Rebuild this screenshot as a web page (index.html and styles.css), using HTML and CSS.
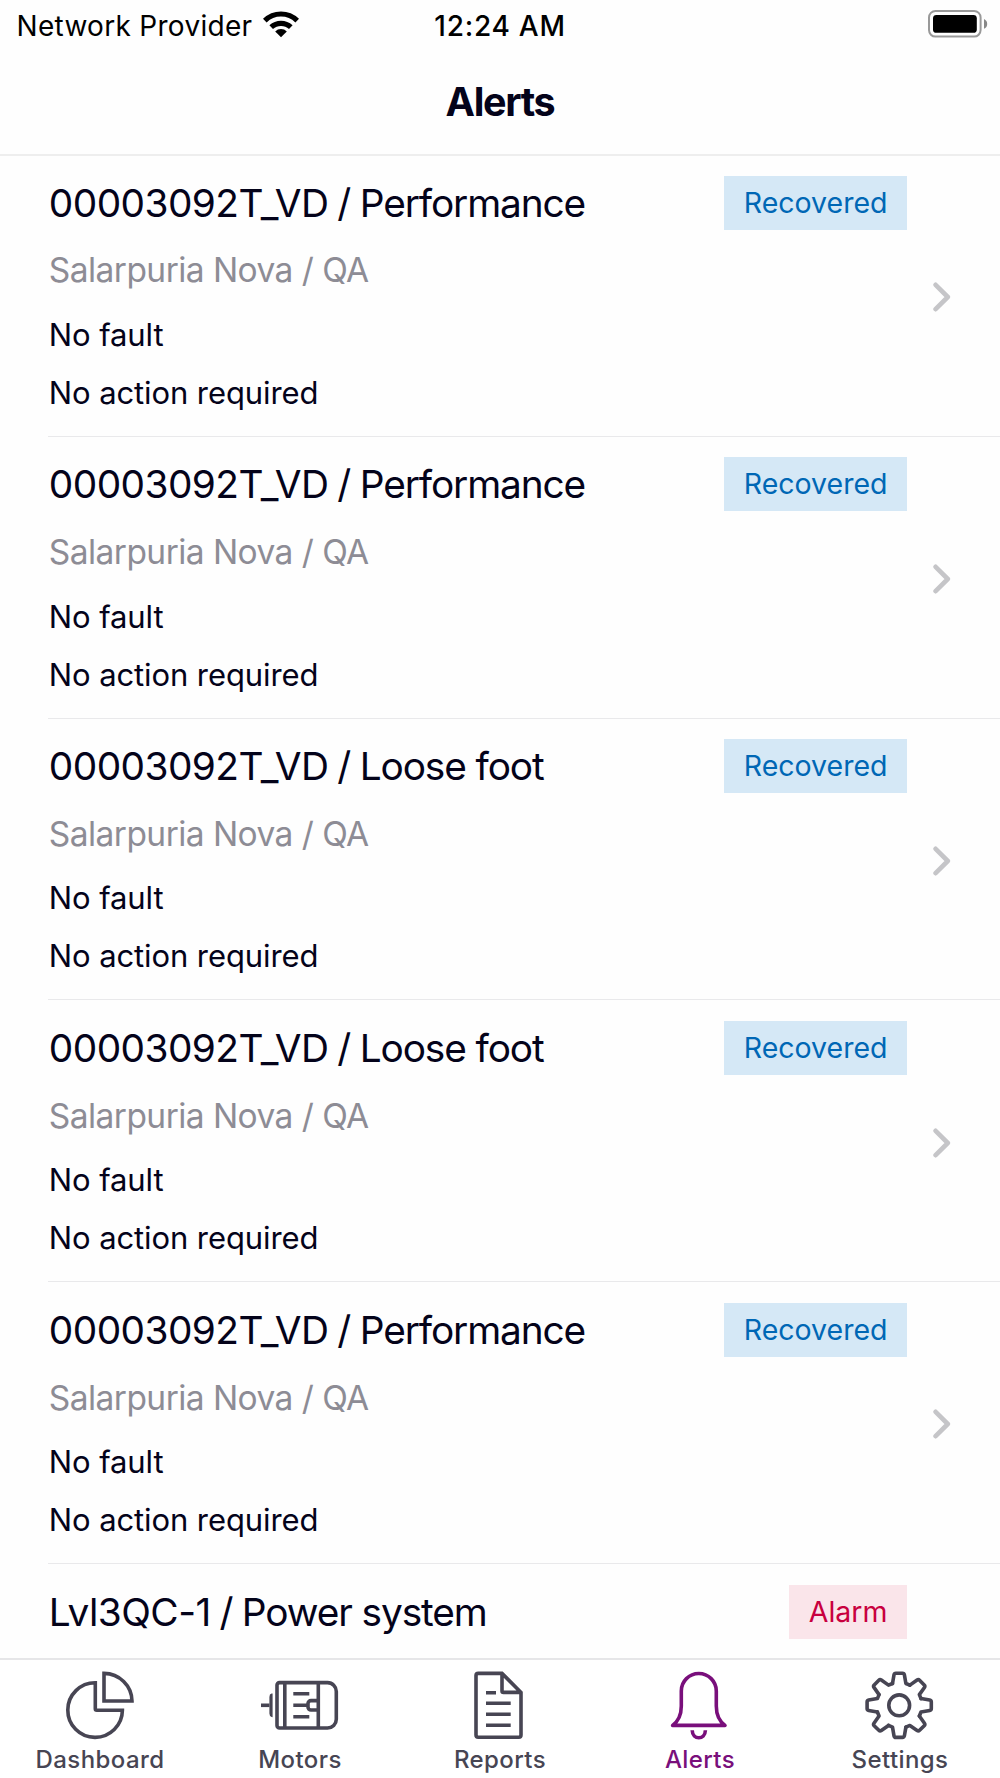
FILE: index.html
```html
<!DOCTYPE html>
<html lang="en">
<head>
<meta charset="utf-8">
<title>Alerts</title>
<link rel="stylesheet" href="styles.css">
</head>
<body>
<div class="screen">
  <header class="status">
    <div class="carrier"><span class="carrier-name">Network Provider</span>
      <svg class="wifi" viewBox="0 0 36 28" width="36" height="28"><g fill="none" stroke="#000" stroke-width="5.2"><path d="M1.8 10.6a23.2 23.2 0 0 1 32.4 0"/><path d="M8.2 17.2a14.2 14.2 0 0 1 19.6 0"/></g><path d="M12.2 21.4a8.4 8.4 0 0 1 11.6 0L18 27.2z"/></svg>
    </div>
    <span class="time">12:24 AM</span>
    <svg class="battery" viewBox="0 0 60 28" width="60" height="28"><rect x="1" y="1" width="51.6" height="25.6" rx="6.5" fill="none" stroke="#999" stroke-width="2"/><rect x="5" y="5" width="43.8" height="17.8" rx="3.4"/><path d="M56 9q3.2 1.6 3.2 4.9T56 18.8z" fill="#888"/></svg>
  </header>
  <div class="titlebar"><h1>Alerts</h1></div>
  <main class="list">
    <article class="row"><div class="info"><div class="head"><h2>00003092T_VD / <span class="kind">Performance</span></h2><span class="badge recovered">Recovered</span></div><p class="site">Salarpuria Nova / QA</p><p class="fault">No fault</p><p class="action">No action required</p></div><svg class="chevron" viewBox="0 0 18 30" width="18" height="30"><path d="M2.6 2.8 14.8 15 2.6 27.2"/></svg></article>
    <article class="row"><div class="info"><div class="head"><h2>00003092T_VD / <span class="kind">Performance</span></h2><span class="badge recovered">Recovered</span></div><p class="site">Salarpuria Nova / QA</p><p class="fault">No fault</p><p class="action">No action required</p></div><svg class="chevron" viewBox="0 0 18 30" width="18" height="30"><path d="M2.6 2.8 14.8 15 2.6 27.2"/></svg></article>
    <article class="row"><div class="info"><div class="head"><h2>00003092T_VD / <span class="kind">Loose foot</span></h2><span class="badge recovered">Recovered</span></div><p class="site">Salarpuria Nova / QA</p><p class="fault">No fault</p><p class="action">No action required</p></div><svg class="chevron" viewBox="0 0 18 30" width="18" height="30"><path d="M2.6 2.8 14.8 15 2.6 27.2"/></svg></article>
    <article class="row"><div class="info"><div class="head"><h2>00003092T_VD / <span class="kind">Loose foot</span></h2><span class="badge recovered">Recovered</span></div><p class="site">Salarpuria Nova / QA</p><p class="fault">No fault</p><p class="action">No action required</p></div><svg class="chevron" viewBox="0 0 18 30" width="18" height="30"><path d="M2.6 2.8 14.8 15 2.6 27.2"/></svg></article>
    <article class="row"><div class="info"><div class="head"><h2>00003092T_VD / <span class="kind">Performance</span></h2><span class="badge recovered">Recovered</span></div><p class="site">Salarpuria Nova / QA</p><p class="fault">No fault</p><p class="action">No action required</p></div><svg class="chevron" viewBox="0 0 18 30" width="18" height="30"><path d="M2.6 2.8 14.8 15 2.6 27.2"/></svg></article>
    <article class="row"><div class="info"><div class="head"><h2>Lvl3QC-1 / <span class="kind">Power system</span></h2><span class="badge alarm">Alarm</span></div></div></article>
  </main>
  <nav class="tabs">
    <a class="tab"><svg class="icon" viewBox="0 0 80 76"><path d="M35.3 16.8V42.8q0 1.5 1.5 1.5H62.4A27.3 27.3 0 1 1 35.3 16.8Z"/><path d="M44 7.4A28.2 28 0 0 1 72 35H44Z"/></svg><span>Dashboard</span></a>
    <a class="tab"><svg class="icon" viewBox="0 0 80 76"><path d="M1 39.3H9.5"/><path d="M11.8 28.4Q10.2 28.8 10.2 31V47.6Q10.2 49.8 11.8 50.2Z" fill="currentColor" stroke-width="1.6"/><path d="M19.5 16.6H67.5a8.8 8.8 0 0 1 8.8 8.8V53.2a8.8 8.8 0 0 1-8.8 8.8H19.5a2.5 2.5 0 0 1-2.5-2.5V19.1a2.5 2.5 0 0 1 2.5-2.5ZM24.8 16.6V62M58.3 16.6V62M33.3 27.7H49.3M33.3 39.3H48M33.3 50.7H49.3"/><path d="M58.3 34.6H51a3 3 0 0 0-3 3V41a3 3 0 0 0 3 3H58.3"/></svg><span>Motors</span></a>
    <a class="tab"><svg class="icon" viewBox="0 0 80 76"><path d="M18.2 7.4H42L61 26.4V69.1a2.2 2.2 0 0 1-2.2 2.2H18.2A2.2 2.2 0 0 1 16 69.1V9.6A2.2 2.2 0 0 1 18.2 7.4ZM42 7.4V24.9q0 1.5 1.5 1.5H61M26 26.7H36M26 37.3H50.7M26 48.3H50.7M26 59.3H50.7"/></svg><span>Reports</span></a>
    <a class="tab active"><svg class="icon" viewBox="0 0 80 76"><path stroke-linejoin="round" d="M12.6 59.4Q21.3 53 21.3 40V25a17.5 17.5 0 0 1 35 0V40Q56.3 53 65 59.4Z"/><path d="M32.2 64.2C32.5 74.3 45.1 74.3 45.4 64.2"/></svg><span>Alerts</span></a>
    <a class="tab"><svg class="icon" viewBox="0 0 80 76"><defs><path id="tooth" d="M-6.7-21.8-5.2-30.5Q-4.9-32.1-3.3-32.1H3.3Q4.9-32.1 5.2-30.5L6.7-21.8 10.7-20.15"/></defs><g transform="translate(39.2 39.3)" stroke-linecap="round" stroke-linejoin="round"><use href="#tooth"/><use href="#tooth" transform="rotate(45)"/><use href="#tooth" transform="rotate(90)"/><use href="#tooth" transform="rotate(135)"/><use href="#tooth" transform="rotate(180)"/><use href="#tooth" transform="rotate(225)"/><use href="#tooth" transform="rotate(270)"/><use href="#tooth" transform="rotate(315)"/><circle r="10.4"/></g></svg><span>Settings</span></a>
  </nav>
</div>
</body>
</html>
```
FILE: styles.css
```css
* { box-sizing: border-box; margin: 0; padding: 0; }
body { background: #fff; color: #04031a; font-family: Inter, "Liberation Sans", sans-serif; overflow: hidden; }
.screen { width: 1000px; height: 1778px; display: flex; flex-direction: column; overflow: hidden; background: #fefefe; }
.status { height: 50px; flex: none; display: grid; grid-template-columns: 1fr auto 1fr; padding: 0 12px; color: #000; font-size: 28px; line-height: 52px; }
.carrier { display: flex; gap: 11px; padding-left: 4.5px; letter-spacing: 0.3px; }
.wifi { margin-top: 10px; }
.time { font-weight: 500; letter-spacing: 0.75px; }
.battery { justify-self: end; margin-top: 10px; }
.titlebar { height: 106px; flex: none; border-bottom: 2px solid #eee; text-align: center; }
h1 { font-size: 39.5px; font-weight: 700; line-height: 105px; letter-spacing: -1.35px; }
.list { flex: 1; min-height: 0; overflow: hidden; margin-top: -1px; padding-left: 48px; }
.row { height: 281.8px; display: flex; align-items: center; border-bottom: 1.5px solid #e9e9eb; }
.info { width: 859px; height: 100%; padding: 20.7px 0 0 0.8px; }
.head { display: flex; justify-content: space-between; height: 54px; }
h2 { font-size: 38.8px; font-weight: 400; line-height: 53px; letter-spacing: -0.55px; word-spacing: -1.5px; }
.kind { letter-spacing: -1.1px; word-spacing: 0; }
.badge { height: 54px; padding: 0 19.5px; font-size: 28.5px; line-height: 54.5px; }
.recovered { color: #0067b5; background: #d5e8f6; }
.alarm { color: #c8003f; background: #fae5ea; }
.site { margin-top: 20.7px; font-size: 33.5px; line-height: 40px; letter-spacing: -0.55px; color: #8d8c95; }
.fault { margin-top: 24.4px; font-size: 31px; line-height: 40px; letter-spacing: -0.1px; }
.action { margin-top: 18px; font-size: 31px; line-height: 40px; letter-spacing: -0.1px; }
.chevron { margin: 3.5px 0 0 26px; fill: none; stroke: #c5c5c8; stroke-width: 4.6; stroke-linecap: round; stroke-linejoin: round; }
.tabs { height: 120px; flex: none; display: grid; grid-template-columns: repeat(5, 1fr); border-top: 2px solid #e6e6e8; background: #fff; }
.tab { display: flex; flex-direction: column; align-items: center; padding-top: 6px; color: #474553; font-size: 24px; font-weight: 500; line-height: 36px; letter-spacing: 0.4px; }
.tab.active { color: #790f7b; }
.icon { width: 80px; height: 76px; fill: none; stroke: currentColor; stroke-width: 3.6; }
```
